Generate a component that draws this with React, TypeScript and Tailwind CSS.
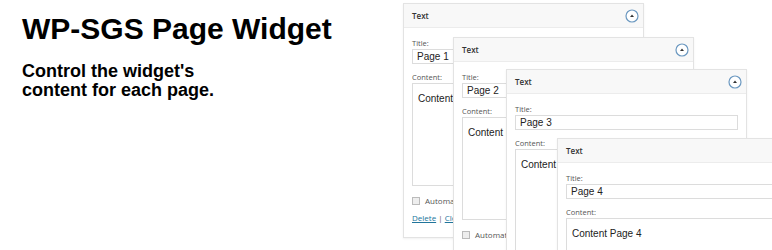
import React from 'react';

const widgets = [
  { title: 'Page 1', left: 'left-[403px]', top: 'top-[3px]' },
  { title: 'Page 2', left: 'left-[453px]', top: 'top-[37px]' },
  { title: 'Page 3', left: 'left-[506px]', top: 'top-[69px]' },
  { title: 'Page 4', left: 'left-[557px]', top: 'top-[138px]' },
];

const ToggleIcon = () => (
  <svg width="14" height="14" viewBox="0 0 14 14">
    <circle cx="7" cy="7" r="6" fill="#fff" stroke="#6b98c0" strokeWidth="1.2" />
    <path d="M5 8 L7 5.6 L9 8 Z" fill="#333" />
  </svg>
);

const Widget = ({ title, left, top }: { title: string; left: string; top: string }) => {
  return (
    <div className={`absolute ${left} ${top} w-[241px] bg-white border border-[#e3e3e3] shadow-[0_1px_2px_rgba(0,0,0,0.06)]`}>
      <div className="h-[24px] flex items-center justify-between pl-[8px] pr-[4px] bg-[#f8f8f8] border-b border-[#ececec]">
        <span className="text-[8px] font-semibold text-[#333] font-['Open_Sans',sans-serif]">Text</span>
        <ToggleIcon />
      </div>
      <div className="px-[8px] pt-[10px] pb-[14px] font-['Open_Sans',sans-serif]">
        <div className="h-[10px] leading-[10px] text-[7.5px] text-[#555]">Title:</div>
        <div className="mt-[1px] h-[15px] border border-[#dcdcdc] px-[4px] flex items-center text-[10px] text-[#222] font-['Liberation_Sans',Arial,sans-serif]">
          {title}
        </div>
        <div className="mt-[8px] h-[10px] leading-[10px] text-[7.5px] text-[#555]">Content:</div>
        <div className="mt-[1px] h-[103px] border border-[#dcdcdc] px-[5px] pt-[9px] text-[10px] leading-[11px] text-[#222] font-['Liberation_Sans',Arial,sans-serif]">
          Content {title}
        </div>
        <div className="mt-[10px] h-[10px] flex items-center gap-[5px] text-[8px] text-[#555]">
          <span className="inline-block w-[8px] h-[8px] border border-[#bbb] bg-[#eee]" />
          <span>Automatically add paragraphs</span>
        </div>
        <div className="mt-[7px] h-[10px] leading-[10px] text-[8px] text-[#21759b]">
          <span className="underline">Delete</span>
          <span className="text-[#666]"> | </span>
          <span className="underline">Close</span>
        </div>
      </div>
    </div>
  );
};

export default function App() {
  return (
    <div className="relative w-[772px] h-[250px] overflow-hidden bg-white font-['Liberation_Sans',Arial,sans-serif]">
      <div className="pl-[22px] pt-[11px]">
        <h1 className="text-[30px] leading-[36px] font-bold text-black">WP-SGS Page Widget</h1>
        <p className="mt-[15px] text-[18px] leading-[19px] font-bold text-black">
          Control the widget's
          <br />
          content for each page.
        </p>
      </div>
      {widgets.map((w) => (
        <Widget key={w.title} {...w} />
      ))}
    </div>
  );
}
